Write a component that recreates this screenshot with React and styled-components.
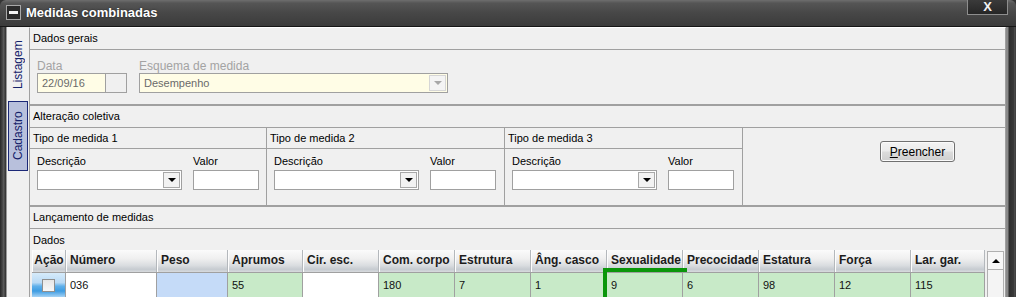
import React from 'react';
import styled, { createGlobalStyle } from 'styled-components';

const GlobalStyle = createGlobalStyle`
  html, body {
    margin: 0;
    padding: 0;
    background: #3a3a3a;
  }
  * {
    box-sizing: border-box;
  }
`;

const Window = styled.div`
  width: 1016px;
  height: 297px;
  overflow: hidden;
  display: flex;
  flex-direction: column;
  background: #343434;
  font-family: "Liberation Sans", Arial, sans-serif;
  font-size: 11px;
  color: #000;
`;

const TitleBar = styled.div`
  position: relative;
  flex: none;
  height: 27px;
  display: flex;
  align-items: center;
  gap: 5px;
  padding: 0 0 1px 6px;
  border-radius: 6px 6px 0 0;
  border-bottom: 1px solid #161616;
  background: linear-gradient(#6e6e6e 0, #555 12%, #474747 50%, #3b3b3b 100%);
`;

const MinimizeIcon = styled.div`
  width: 15px;
  height: 15px;
  border: 1px solid #a8a8a8;
  background: #2b2b2b;
  display: flex;
  align-items: center;
  justify-content: center;
  &::after {
    content: '';
    width: 9px;
    height: 3px;
    background: #f4f4f4;
  }
`;

const Title = styled.span`
  color: #fff;
  font-weight: bold;
  font-size: 13px;
  text-shadow: 0 0 2px rgba(0, 0, 0, 0.6);
`;

const CloseButton = styled.div`
  position: absolute;
  top: -1px;
  right: 8px;
  width: 41px;
  height: 16px;
  border: 1px solid #8e8e8e;
  border-top: none;
  background: linear-gradient(#3c3c3c, #262626);
  display: flex;
  align-items: center;
  justify-content: center;
  color: #f2f2f2;
  font-weight: bold;
  font-size: 13px;
  line-height: 1;
`;

const Body = styled.div`
  flex: 1;
  min-height: 0;
  display: flex;
`;

const LeftEdge = styled.div`
  width: 6px;
  flex: none;
  background: linear-gradient(90deg, #262626 0, #4a4a4a 45%, #5a5a5a 60%, #2e2e2e 100%);
`;

const RightEdge = styled.div`
  width: 10px;
  flex: none;
  background: linear-gradient(90deg, #8a8a8a 0, #8a8a8a 20%, #2e2e2e 30%, #3a3a3a 80%, #5a5a5a 90%, #2a2a2a 100%);
`;

const SideTabs = styled.div`
  width: 23px;
  flex: none;
  background: #f0f0f0;
  border-left: 1px solid #9a9a9a;
  display: flex;
  flex-direction: column;
  padding: 3px 0 0 1px;
`;

const SideTab = styled.div`
  width: 20px;
  height: 70px;
  margin-bottom: 1px;
  display: flex;
  align-items: center;
  justify-content: center;
  border: 1px solid ${p => (p.$active ? '#1b2877' : 'transparent')};
  background: ${p => (p.$active ? '#b8c0dc' : 'transparent')};
  color: #14226a;
  font-size: 12px;
  writing-mode: vertical-rl;
  transform: rotate(180deg);
`;

const Content = styled.div`
  flex: 1;
  min-width: 0;
  display: flex;
  flex-direction: column;
  background: #f0f0f0;
  border-left: 1px solid #a0a0a0;
  border-right: 1px solid #a0a0a0;
  border-top: 1px solid #fff;
`;

const Section = styled.div`
  border-bottom: ${p => (p.$last ? 'none' : '2px solid #a0a0a0')};
`;

const SectionHeader = styled.div`
  height: 22px;
  line-height: 21px;
  padding-left: 3px;
  border-bottom: 1px solid #a0a0a0;
`;

const GeneralBody = styled.div`
  height: 54px;
  display: flex;
  padding: 10px 0 0 7px;
  gap: 12px;
`;

const Field = styled.div`
  display: flex;
  flex-direction: column;
`;

const Label = styled.div`
  height: 13px;
  line-height: 13px;
  margin-bottom: ${p => p.$gap || 0}px;
  font-size: ${p => (p.$disabled ? 12 : 11)}px;
  color: ${p => (p.$disabled ? '#a3a3a3' : '#000')};
`;

const InputRow = styled.div`
  display: flex;
`;

const TextBox = styled.div`
  width: ${p => p.$w}px;
  height: 20px;
  line-height: 18px;
  padding-left: 4px;
  border: 1px solid #a0a0a0;
  background: ${p => (p.$disabled ? '#fffde6' : '#fff')};
  color: #6a6a6a;
`;

const EmptyBox = styled.div`
  width: 21px;
  height: 20px;
  border: 1px solid #a0a0a0;
  border-left: none;
`;

const SelectBox = styled.div`
  width: ${p => p.$w}px;
  height: 20px;
  border: 1px solid #a0a0a0;
  background: ${p => (p.$disabled ? '#fffde6' : '#fff')};
  color: #6a6a6a;
  display: flex;
  align-items: center;
  justify-content: space-between;
  padding: 0 1px 0 4px;
`;

const ArrowButton = styled.div`
  width: 17px;
  height: 16px;
  border: 1px solid ${p => (p.$disabled ? '#d6d6d6' : '#a8a8a8')};
  background: ${p => (p.$disabled ? '#f4f4f4' : '#f2f2f2')};
  display: flex;
  align-items: center;
  justify-content: center;
  &::after {
    content: '';
    border-left: 4px solid transparent;
    border-right: 4px solid transparent;
    border-top: 4px solid ${p => (p.$disabled ? '#a8a8a8' : '#000')};
  }
`;

const Groups = styled.div`
  display: grid;
  grid-template-columns: 237px 238px 238px 1fr;
`;

const Group = styled.div`
  border-right: ${p => (p.$last ? 'none' : '1px solid #a0a0a0')};
  display: flex;
  flex-direction: column;
`;

const GroupHeader = styled.div`
  height: 21px;
  line-height: 20px;
  padding-left: 3px;
  border-bottom: 1px solid #a0a0a0;
`;

const GroupBody = styled.div`
  height: 56px;
  display: flex;
  gap: 11px;
  padding: 6px 0 0 7px;
`;

const ButtonArea = styled.div`
  padding: 13px 0 0 137px;
`;

const Button = styled.div`
  width: 75px;
  height: 21px;
  border: 1px solid #707070;
  border-radius: 3px;
  box-shadow: inset 0 0 0 1px #fbfbfb;
  background: linear-gradient(#f3f3f3 0, #ebebeb 48%, #dcdcdc 52%, #cfcfcf 100%);
  display: flex;
  align-items: center;
  justify-content: center;
  font-size: 12px;
  u {
    text-decoration: underline;
  }
`;

const DataLabel = styled.div`
  height: 21px;
  line-height: 22px;
  padding-left: 3px;
`;

const TableArea = styled.div`
  display: flex;
  align-items: flex-start;
  gap: 2px;
  padding-left: 2px;
`;

const Grid = styled.div`
  display: grid;
  grid-template-columns: 34px 91px 71px 75px repeat(8, 76px) 74px;
  grid-auto-rows: min-content;
  align-content: start;
`;

const HeaderCell = styled.div`
  height: 22px;
  line-height: 21px;
  padding-left: ${p => (p.$center ? 0 : 3)}px;
  text-align: ${p => (p.$center ? 'center' : 'left')};
  font-weight: bold;
  font-size: 12px;
  color: #1c1c1c;
  white-space: nowrap;
  overflow: hidden;
  border-left: 1px solid #fdfdfd;
  border-right: 1px solid #b4b8bc;
  background: linear-gradient(#fbfbfb 0, #efefef 40%, #dadde0 70%, #c6cbd0 88%, #d8dbde 100%);
`;

const Cell = styled.div`
  position: relative;
  height: 25px;
  line-height: 24px;
  padding-left: 4px;
  font-size: 11px;
  color: #111;
  border-right: 1px solid #a0a0a0;
  border-top: 1px solid #a0a0a0;
  background: ${p => p.$bg};
  outline: ${p => (p.$focus ? '4px solid #0a960a' : 'none')};
`;

const ActionCell = styled.div`
  height: 25px;
  display: flex;
  align-items: center;
  justify-content: center;
  border-right: 1px solid #a0a0a0;
  border-top: 1px solid #a0a0a0;
  background: linear-gradient(#d6ebfa 0, #b9daf5 40%, #5fb0ea 55%, #3d9ce2 75%, #a6d3f5 100%);
`;

const Checkbox = styled.div`
  width: 13px;
  height: 13px;
  border: 1px solid #8e8f8f;
  background: linear-gradient(#e6e6e6, #f8f8f8);
`;

const ScrollBar = styled.div`
  width: 17px;
  height: 60px;
  margin-top: 1px;
  border: 1px solid #b0b0b0;
  background: #f4f4f4;
`;

const ScrollButton = styled.div`
  height: 18px;
  border-bottom: 1px solid #b0b0b0;
  background: #f7f7f7;
  display: flex;
  align-items: center;
  justify-content: center;
  &::after {
    content: '';
    border-left: 4px solid transparent;
    border-right: 4px solid transparent;
    border-bottom: 4px solid #000;
  }
`;

const GREEN = '#c8eac8';
const BLUE = '#c5dbf8';
const WHITE = '#fff';

const columns = [
  { title: 'Número', value: '036', bg: WHITE },
  { title: 'Peso', value: '', bg: BLUE },
  { title: 'Aprumos', value: '55', bg: GREEN },
  { title: 'Cir. esc.', value: '', bg: WHITE },
  { title: 'Com. corpo', value: '180', bg: GREEN },
  { title: 'Estrutura', value: '7', bg: GREEN },
  { title: 'Âng. casco', value: '1', bg: GREEN },
  { title: 'Sexualidade', value: '9', bg: GREEN, focus: true },
  { title: 'Precocidade', value: '6', bg: GREEN },
  { title: 'Estatura', value: '98', bg: GREEN },
  { title: 'Força', value: '12', bg: GREEN },
  { title: 'Lar. gar.', value: '115', bg: GREEN },
];

const MeasureGroup = ({ title }) => (
  <Group>
    <GroupHeader>{title}</GroupHeader>
    <GroupBody>
      <Field>
        <Label $gap={2}>Descrição</Label>
        <SelectBox $w={145}>
          <span />
          <ArrowButton />
        </SelectBox>
      </Field>
      <Field>
        <Label $gap={2}>Valor</Label>
        <TextBox $w={66} />
      </Field>
    </GroupBody>
  </Group>
);

const App = () => {
  return (
    <Window>
      <GlobalStyle />
      <TitleBar>
        <MinimizeIcon />
        <Title>Medidas combinadas</Title>
        <CloseButton>X</CloseButton>
      </TitleBar>
      <Body>
        <LeftEdge />
        <SideTabs>
          <SideTab>Listagem</SideTab>
          <SideTab $active>Cadastro</SideTab>
        </SideTabs>
        <Content>
          <Section>
            <SectionHeader>Dados gerais</SectionHeader>
            <GeneralBody>
              <Field>
                <Label $disabled>Data</Label>
                <InputRow>
                  <TextBox $w={69} $disabled>22/09/16</TextBox>
                  <EmptyBox />
                </InputRow>
              </Field>
              <Field>
                <Label $disabled>Esquema de medida</Label>
                <SelectBox $w={309} $disabled>
                  <span>Desempenho</span>
                  <ArrowButton $disabled />
                </SelectBox>
              </Field>
            </GeneralBody>
          </Section>

          <Section>
            <SectionHeader>Alteração coletiva</SectionHeader>
            <Groups>
              <MeasureGroup title="Tipo de medida 1" />
              <MeasureGroup title="Tipo de medida 2" />
              <MeasureGroup title="Tipo de medida 3" />
              <Group $last>
                <ButtonArea>
                  <Button><span><u>P</u>reencher</span></Button>
                </ButtonArea>
              </Group>
            </Groups>
          </Section>

          <Section $last>
            <SectionHeader>Lançamento de medidas</SectionHeader>
            <DataLabel>Dados</DataLabel>
            <TableArea>
              <Grid>
                <HeaderCell $center>Ação</HeaderCell>
                {columns.map(c => (
                  <HeaderCell key={c.title}>{c.title}</HeaderCell>
                ))}
                <ActionCell>
                  <Checkbox />
                </ActionCell>
                {columns.map(c => (
                  <Cell key={c.title} $bg={c.bg} $focus={c.focus}>{c.value}</Cell>
                ))}
              </Grid>
              <ScrollBar>
                <ScrollButton />
              </ScrollBar>
            </TableArea>
          </Section>
        </Content>
        <RightEdge />
      </Body>
    </Window>
  );
};

export default App;
